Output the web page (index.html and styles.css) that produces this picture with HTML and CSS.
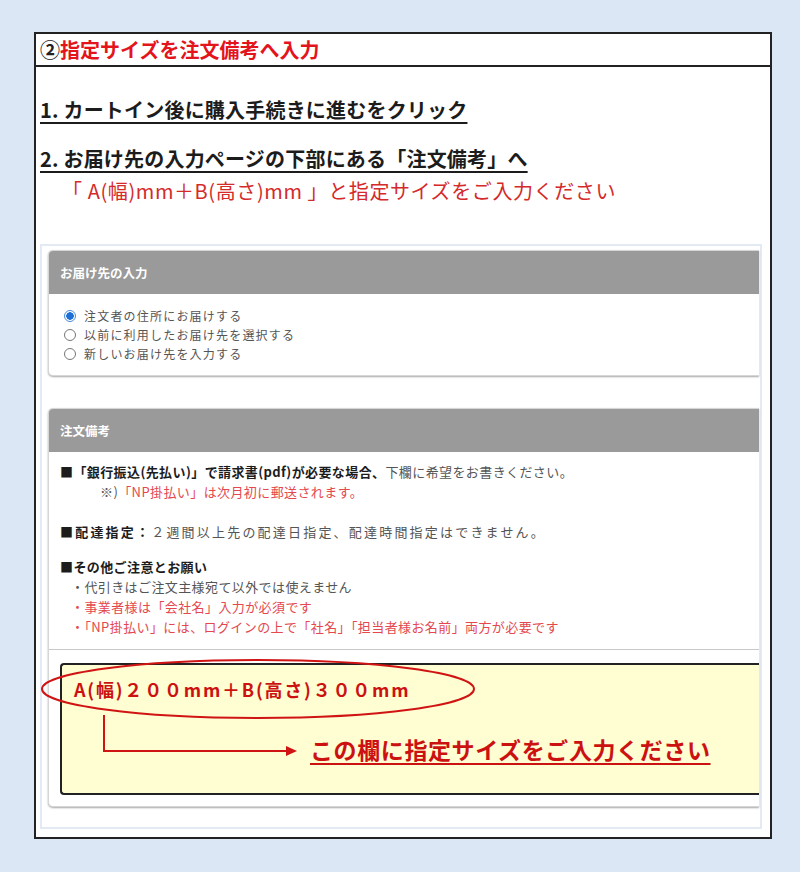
FILE: index.html
```html
<!DOCTYPE html>
<html lang="ja">
<head>
  <meta charset="UTF-8">
  <title>指定サイズを注文備考へ入力</title>
  <link rel="stylesheet" href="styles.css">
</head>
<body>
<div class="sheet">
  <div class="sheet-head"><span class="num">②</span>指定サイズを注文備考へ入力</div>

  <div class="sheet-body">
    <p class="step step1"><span class="step-text">1. カートイン後に購入手続きに進むをクリック</span></p>
    <p class="step step2"><span class="step-text">2. お届け先の入力ページの下部にある「注文備考」へ</span></p>
    <p class="step-note">「 A(幅)mm＋B(高さ)mm 」と指定サイズをご入力ください</p>

    <!-- order form capture -->
    <div class="shot">
      <div class="panel">
        <div class="panel-head">お届け先の入力</div>
        <div class="panel-body radios">
          <div class="radio-row"><span class="radio checked"></span>注文者の住所にお届けする</div>
          <div class="radio-row"><span class="radio"></span>以前に利用したお届け先を選択する</div>
          <div class="radio-row"><span class="radio"></span>新しいお届け先を入力する</div>
        </div>
      </div>

      <div class="panel panel-memo">
        <div class="panel-head">注文備考</div>
        <div class="memo-text">
          <div class="para">
            <div class="line"><b>■「銀行振込(先払い)」で請求書(pdf)が必要な場合、</b>下欄に希望をお書きください。</div>
            <div class="line sub">※)<span class="pink">「NP掛払い」は次月初に郵送されます。</span></div>
          </div>
          <div class="para para-wide">
            <div class="line spaced"><b>■配達指定：</b>２週間以上先の配達日指定、配達時間指定はできません。</div>
          </div>
          <div class="para para-last">
            <div class="line"><b>■その他ご注意とお願い</b></div>
            <div class="line item">・代引きはご注文主様宛て以外では使えません</div>
            <div class="line item pink">・事業者様は「会社名」入力が必須です</div>
            <div class="line item pink">・「NP掛払い」には、ログインの上で「社名」「担当者様お名前」両方が必要です</div>
          </div>
        </div>

        <div class="memo-wrap">
          <div class="memo-box">
            <div class="memo-sample">A(幅)２００mm＋B(高さ)３００mm</div>
            <div class="memo-guide">この欄に指定サイズをご入力ください</div>
          </div>
          <svg class="memo-mark" width="450" height="100" viewBox="0 0 450 100">
            <ellipse cx="218" cy="31" rx="216" ry="29" fill="none" stroke="#d01414" stroke-width="2"/>
            <polyline points="64,57 64,93 248,93" fill="none" stroke="#d01414" stroke-width="2"/>
            <polygon points="246,88 257,93 246,98" fill="#d01414"/>
          </svg>
        </div>
      </div>
    </div>
  </div>
</div>
</body>
</html>
```

FILE: styles.css
```css
* {
  box-sizing: border-box;
}

body {
  margin: 0;
  background: #dbe7f5;
  font-family: "Noto Sans CJK JP", "Noto Sans", sans-serif;
  color: #222;
}

p {
  margin: 0;
}

.sheet {
  margin: 32px 0 0 34px;
  width: 738px;
  height: 807px;
  background: #fff;
  border: 2px solid #222;
}

.sheet-head {
  height: 33px;
  border-bottom: 2px solid #222;
  padding-left: 4px;
  font-size: 20px;
  font-weight: bold;
  line-height: 31px;
  color: #e3141c;
}

.sheet-head .num {
  color: #222;
}

.sheet-body {
  padding: 0 8px 0 4px;
}

.step {
  font-size: 20px;
  font-weight: bold;
  line-height: 28px;
  letter-spacing: 0.2px;
  color: #1c1c1c;
}

.step1 {
  margin-top: 29px;
}

.step2 {
  margin-top: 21px;
}

.step-text {
  text-decoration: underline;
  text-decoration-thickness: 2px;
  text-underline-offset: 4px;
}

.step-note {
  margin-top: 4px;
  padding-left: 22px;
  font-size: 20px;
  line-height: 28px;
  letter-spacing: 0.6px;
  color: #d42a2a;
}

/* capture of the order form */
.shot {
  margin-top: 39px;
  border: 2px solid #e3eaf3;
  padding: 4px 1px 22px 6px;
  height: 585px;
}

.panel {
  background: #fff;
  border: 1px solid #d6d6d6;
  border-right: none;
  border-radius: 5px 0 0 5px;
  box-shadow: 0 1px 2px rgba(0, 0, 0, 0.35);
}

.panel-memo {
  margin-top: 32px;
}

.panel-head {
  height: 43px;
  background: #9a9a9a;
  border-radius: 4px 0 0 0;
  padding-left: 11px;
  color: #fff;
  font-size: 12.5px;
  font-weight: bold;
  line-height: 43px;
}

.radios {
  padding: 12px 0 12px 15px;
  font-size: 12px;
  letter-spacing: 1.2px;
  line-height: 19px;
  color: #555;
}

.radio-row {
  display: flex;
  align-items: center;
  gap: 8px;
}

.radio {
  width: 12px;
  height: 12px;
  border: 1px solid #777;
  border-radius: 50%;
  background: #fff;
}

.radio.checked {
  border-color: #4a8ad8;
  background: radial-gradient(circle, #1d6fd8 0 3.5px, #fff 4px);
}

.memo-text {
  padding: 10px 0 12px 11px;
  border-bottom: 1px solid #c8c8c8;
  font-size: 13px;
  line-height: 20px;
  letter-spacing: 0.4px;
  color: #555;
}

.memo-text b {
  color: #1c1c1c;
}

.para-wide {
  margin-top: 20px;
}

.para-last {
  margin-top: 15px;
}

.line.sub {
  padding-left: 40px;
}

.line.spaced {
  letter-spacing: 2.2px;
}

.line.item {
  padding-left: 11px;
}

.pink {
  color: #e4484e;
}

.memo-wrap {
  position: relative;
  padding: 13px 0 11px 11px;
}

.memo-box {
  height: 132px;
  background: #fffdd2;
  border: 2px solid #222;
  border-right: none;
  border-radius: 4px 0 0 4px;
  padding: 11px 0 0 12px;
  color: #cc1111;
  font-weight: bold;
}

.memo-sample {
  font-size: 18px;
  line-height: 26px;
  letter-spacing: 1.8px;
}

.memo-guide {
  width: max-content;
  margin-top: 31px;
  margin-left: 236px;
  font-size: 23px;
  line-height: 32px;
  letter-spacing: 0.6px;
  text-decoration: underline;
  text-decoration-thickness: 2px;
  text-underline-offset: 4px;
  text-decoration-skip-ink: none;
}

.memo-mark {
  position: absolute;
  left: -9px;
  top: 8px;
}
```
